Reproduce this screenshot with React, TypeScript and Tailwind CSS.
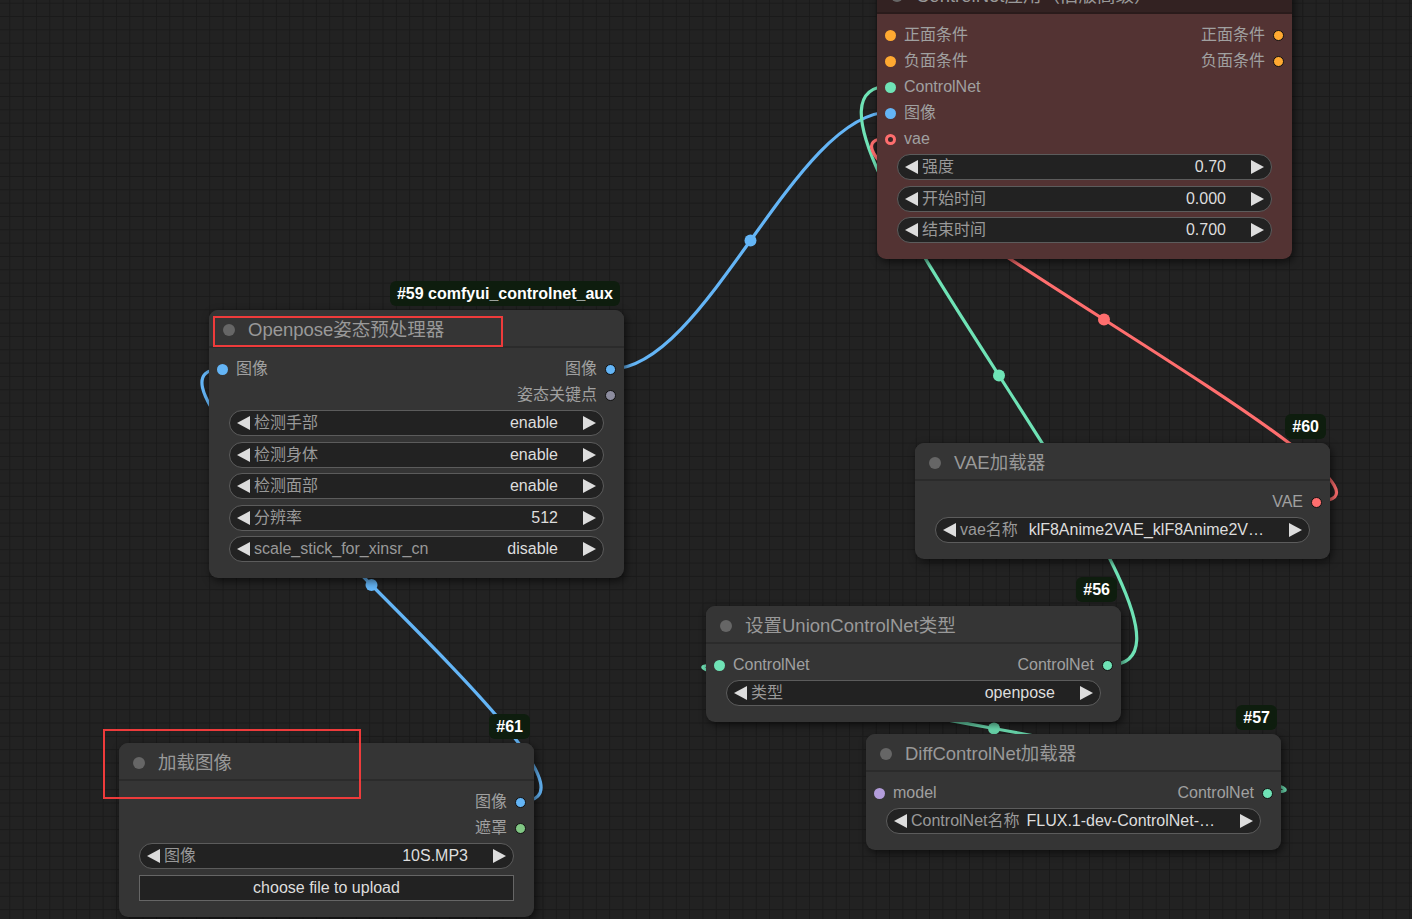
import React from "react";

type Port = { label: string; dot: string; ring?: boolean };
type Row = { in?: Port; out?: Port };
type Widget = { label: string; value: string };

type NodeProps = {
  pos: string;
  title: string;
  badge?: string;
  brown?: boolean;
  rows: Row[];
  widgets: Widget[];
  button?: string;
};

// wire endpoints, taken from slot positions on the canvas
const wires = [
  { from: [611, 369], to: [890, 112], color: "#64b5f6" },
  { from: [521, 801], to: [222, 369], color: "#64b5f6" },
  { from: [1108, 665], to: [890, 86], color: "#6fe3b6" },
  { from: [1318, 501], to: [890, 138], color: "#ff6e6e" },
  { from: [1269, 792], to: [719, 665], color: "#6fe3b6" },
];

// litegraph style: control handles a quarter of the link length
const wirePath = (a: number[], b: number[]) => {
  const d = Math.hypot(b[0] - a[0], b[1] - a[1]) * 0.25;
  return `M ${a[0]} ${a[1]} C ${a[0] + d} ${a[1]}, ${b[0] - d} ${b[1]}, ${b[0]} ${b[1]}`;
};

const midPoint = (a: number[], b: number[]) => [(a[0] + b[0]) / 2, (a[1] + b[1]) / 2];

const Arrow = ({ right }: { right?: boolean }) => (
  <svg width="13" height="14" viewBox="0 0 13 14" className="shrink-0">
    <path d={right ? "M0 0 L13 7 L0 14 Z" : "M13 0 L0 7 L13 14 Z"} fill="#dddddd" />
  </svg>
);

const Dot = ({ port, out }: { port: Port; out?: boolean }) =>
  port.ring ? (
    <span className={`w-[11px] h-[11px] rounded-full border-[3px] shrink-0 ${port.dot}`} />
  ) : (
    <span
      className={`w-[11px] h-[11px] rounded-full shrink-0 ${port.dot} ${out ? "border border-[#111]" : ""}`}
    />
  );

const Combo = ({ w }: { w: Widget }) => (
  <div className="h-[26px] rounded-full border border-[#5c5c5c] bg-[#222222] flex items-center px-[7px] text-[16px] whitespace-nowrap">
    <Arrow />
    <span className="ml-[4px] text-[#999999]">{w.label}</span>
    <span className="ml-auto text-[#dddddd]">{w.value}</span>
    <span className="ml-[25px] flex">
      <Arrow right />
    </span>
  </div>
);

function Node({ pos, title, badge, brown, rows, widgets, button }: NodeProps) {
  return (
    <div
      className={`absolute w-[415px] rounded-[9px] shadow-[2px_3px_8px_rgba(0,0,0,0.6)] ${pos} ${
        brown ? "bg-[#533333]" : "bg-[#353535]"
      }`}
    >
      {badge && (
        <div className="absolute right-[4px] top-[-29px] h-[25px] px-[7px] flex items-center rounded-[6px] bg-[#0e1d0e] text-white font-bold text-[16px] whitespace-nowrap">
          {badge}
        </div>
      )}
      <div
        className={`h-[38px] pt-[4px] flex items-center rounded-t-[9px] border-b-2 ${
          brown ? "bg-[#332222] border-[#2a1b1b]" : "bg-[#353535] border-[#2b2b2b]"
        }`}
      >
        <span className="ml-[14px] w-[12px] h-[12px] rounded-full bg-[#666666]" />
        <span className="ml-[13px] text-[18.5px] text-[#999999] whitespace-nowrap">{title}</span>
      </div>
      <div className="pt-[8px] pb-[16px]">
        {rows.map((r, i) => (
          <div key={i} className="h-[26px] flex items-center px-[8px] text-[16px] text-[#a0a0a0]">
            {r.in && (
              <>
                <Dot port={r.in} />
                <span className="ml-[8px]">{r.in.label}</span>
              </>
            )}
            {r.out && (
              <>
                <span className="ml-auto mr-[8px]">{r.out.label}</span>
                <Dot port={r.out} out />
              </>
            )}
          </div>
        ))}
        <div className="mt-[2px] flex flex-col gap-[5.5px] px-[20px]">
          {widgets.map((w, i) => (
            <Combo key={i} w={w} />
          ))}
          {button && (
            <div className="h-[26px] border border-[#666666] bg-[#222222] flex items-center justify-center text-[16px] text-[#dddddd]">
              {button}
            </div>
          )}
        </div>
      </div>
    </div>
  );
}

const orange = "bg-[#ffa931]";
const blue = "bg-[#64b5f6]";
const green = "bg-[#6fe3b6]";

export default function App() {
  return (
    <div className="relative w-[1412px] h-[919px] overflow-hidden bg-[#222222] font-[family-name:'Liberation_Sans','Noto_Sans_CJK_SC',sans-serif]">
      <svg width="1412" height="919" className="absolute inset-0">
        <defs>
          <pattern id="grid" x="9.3" y="2.7" width="13.33" height="13.33" patternUnits="userSpaceOnUse">
            <path d="M 0 0 L 13.33 0 M 0 0 L 0 13.33" fill="none" stroke="#1a1a1a" strokeWidth="1.3" shapeRendering="crispEdges" />
          </pattern>
        </defs>
        <rect width="1412" height="919" fill="url(#grid)" />
        {wires.map((w, i) => {
          const m = midPoint(w.from, w.to);
          return (
            <g key={i}>
              <path d={wirePath(w.from, w.to)} fill="none" stroke={w.color} strokeWidth="3.2" />
              <circle cx={m[0]} cy={m[1]} r="6" fill={w.color} />
            </g>
          );
        })}
      </svg>

      <Node
        pos="left-[877px] top-[-24px]"
        brown
        title="ControlNet应用（旧版高级）"
        rows={[
          { in: { label: "正面条件", dot: orange }, out: { label: "正面条件", dot: orange } },
          { in: { label: "负面条件", dot: orange }, out: { label: "负面条件", dot: orange } },
          { in: { label: "ControlNet", dot: green } },
          { in: { label: "图像", dot: blue } },
          { in: { label: "vae", dot: "border-[#ff6e6e] bg-[#3a2626]", ring: true } },
        ]}
        widgets={[
          { label: "强度", value: "0.70" },
          { label: "开始时间", value: "0.000" },
          { label: "结束时间", value: "0.700" },
        ]}
      />

      <Node
        pos="left-[209px] top-[310px]"
        badge="#59 comfyui_controlnet_aux"
        title="Openpose姿态预处理器"
        rows={[
          { in: { label: "图像", dot: blue }, out: { label: "图像", dot: blue } },
          { out: { label: "姿态关键点", dot: "bg-[#8c8c9e]" } },
        ]}
        widgets={[
          { label: "检测手部", value: "enable" },
          { label: "检测身体", value: "enable" },
          { label: "检测面部", value: "enable" },
          { label: "分辨率", value: "512" },
          { label: "scale_stick_for_xinsr_cn", value: "disable" },
        ]}
      />

      <Node
        pos="left-[915px] top-[443px]"
        badge="#60"
        title="VAE加载器"
        rows={[{ out: { label: "VAE", dot: "bg-[#ff6e6e]" } }]}
        widgets={[{ label: "vae名称", value: "klF8Anime2VAE_klF8Anime2V…" }]}
      />

      <Node
        pos="left-[706px] top-[606px]"
        badge="#56"
        title="设置UnionControlNet类型"
        rows={[{ in: { label: "ControlNet", dot: green }, out: { label: "ControlNet", dot: green } }]}
        widgets={[{ label: "类型", value: "openpose" }]}
      />

      <Node
        pos="left-[866px] top-[734px]"
        badge="#57"
        title="DiffControlNet加载器"
        rows={[{ in: { label: "model", dot: "bg-[#b39ddb]" }, out: { label: "ControlNet", dot: green } }]}
        widgets={[{ label: "ControlNet名称", value: "FLUX.1-dev-ControlNet-…" }]}
      />

      <Node
        pos="left-[119px] top-[743px]"
        badge="#61"
        title="加载图像"
        rows={[
          { out: { label: "图像", dot: blue } },
          { out: { label: "遮罩", dot: "bg-[#81c784]" } },
        ]}
        widgets={[{ label: "图像", value: "10S.MP3" }]}
        button="choose file to upload"
      />

      {/* red annotation boxes */}
      <div className="absolute left-[213px] top-[316px] w-[290px] h-[31px] border-2 border-[#ee3b3b]" />
      <div className="absolute left-[103px] top-[729px] w-[258px] h-[70px] border-2 border-[#ee3b3b]" />
    </div>
  );
}
